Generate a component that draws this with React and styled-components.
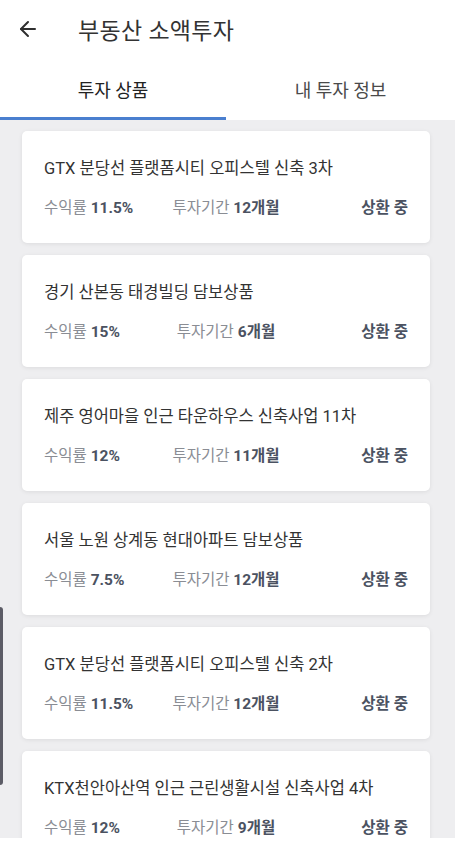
import React, { useState } from "react";
import styled, { createGlobalStyle } from "styled-components";
import { ArrowLeft } from "lucide-react";

const products = [
  { title: "GTX 분당선 플랫폼시티 오피스텔 신축 3차", rate: "11.5%", period: "12개월" },
  { title: "경기 산본동 태경빌딩 담보상품", rate: "15%", period: "6개월" },
  { title: "제주 영어마을 인근 타운하우스 신축사업 11차", rate: "12%", period: "11개월" },
  { title: "서울 노원 상계동 현대아파트 담보상품", rate: "7.5%", period: "12개월" },
  { title: "GTX 분당선 플랫폼시티 오피스텔 신축 2차", rate: "11.5%", period: "12개월" },
  { title: "KTX천안아산역 인근 근린생활시설 신축사업 4차", rate: "12%", period: "9개월" },
];

function App() {
  const [tab, setTab] = useState(0);

  return (
    <>
      <GlobalStyle />
      <Screen>
        <Header>
          <BackButton>
            <ArrowLeft size={24} strokeWidth={2} />
          </BackButton>
          <Title>부동산 소액투자</Title>
        </Header>
        <Tabs>
          <Tab active={tab === 0} onClick={() => setTab(0)}>
            투자 상품
          </Tab>
          <Tab active={tab === 1} onClick={() => setTab(1)}>
            내 투자 정보
          </Tab>
        </Tabs>
        <List>
          {products.map((p, i) => (
            <Card key={i}>
              <CardTitle>{p.title}</CardTitle>
              <Meta>
                <MetaItem>
                  수익률 <b>{p.rate}</b>
                </MetaItem>
                <MetaItem>
                  투자기간 <b>{p.period}</b>
                </MetaItem>
                <Status>상환 중</Status>
              </Meta>
            </Card>
          ))}
        </List>
      </Screen>
      <SideHandle />
    </>
  );
}

export default App;

const GlobalStyle = createGlobalStyle`
  html, body {
    margin: 0;
    padding: 0;
    background: #ffffff;
  }
  body {
    font-family: Roboto, "Noto Sans CJK KR", "Noto Sans", sans-serif;
    -webkit-font-smoothing: antialiased;
  }
`;

const Screen = styled.div`
  width: 455px;
  height: 838px;
  display: flex;
  flex-direction: column;
  overflow: hidden;
  background: #fff;
`;

const Header = styled.div`
  height: 58px;
  display: flex;
  align-items: center;
  flex-shrink: 0;
`;

const BackButton = styled.button`
  width: 58px;
  height: 56px;
  padding: 0 0 0 16px;
  display: flex;
  align-items: center;
  border: none;
  background: none;
  color: #2f2f2f;
  cursor: pointer;
`;

const Title = styled.h1`
  margin: 0 0 0 20px;
  font-size: 23px;
  font-weight: 400;
  color: #333;
  letter-spacing: 0.3px;
`;

const Tabs = styled.div`
  display: grid;
  grid-template-columns: 226px 1fr;
  height: 62px;
  flex-shrink: 0;
`;

const Tab = styled.button`
  border: none;
  background: none;
  font-family: inherit;
  font-size: 18px;
  color: ${(p) => (p.active ? "#222" : "#4a4a4a")};
  padding: 2px 0 0;
  border-bottom: 3px solid ${(p) => (p.active ? "#4a7fcf" : "transparent")};
  cursor: pointer;
`;

const List = styled.div`
  flex: 1;
  background: #eeeef0;
  padding: 11px 25px 0 22px;
  display: flex;
  flex-direction: column;
  gap: 12px;
  overflow: hidden;
`;

const Card = styled.div`
  background: #fff;
  border-radius: 5px;
  box-shadow: 0 1px 4px rgba(0, 0, 0, 0.08);
  padding: 26px 22px 0;
  height: 112px;
  box-sizing: border-box;
  flex-shrink: 0;
`;

const CardTitle = styled.div`
  font-size: 16.5px;
  color: #333;
  line-height: 24px;
`;

const Meta = styled.div`
  display: grid;
  grid-template-columns: 1fr auto 1fr;
  align-items: center;
  margin-top: 17px;
  font-size: 15.5px;
  line-height: 20px;
`;

const MetaItem = styled.span`
  color: #8a8d94;
  b {
    font-weight: 700;
    color: #4b5261;
  }
`;

const Status = styled.span`
  justify-self: end;
  font-weight: 700;
  color: #4b5261;
`;

const SideHandle = styled.div`
  position: fixed;
  left: 0;
  top: 607px;
  width: 3px;
  height: 178px;
  background: #5c5c66;
  border-radius: 0 3px 3px 0;
`;
